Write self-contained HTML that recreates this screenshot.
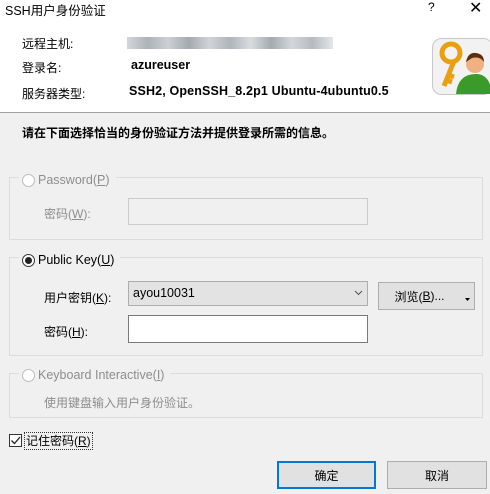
<!DOCTYPE html>
<html><head><meta charset="utf-8"><style>
*{margin:0;padding:0;box-sizing:border-box}
body{width:490px;height:494px;background:#f0f0f0;font-family:"Liberation Sans","Microsoft YaHei","Noto Sans CJK SC",sans-serif;font-size:12px;color:#000;position:relative;overflow:hidden}
.a{position:absolute;white-space:nowrap}
.top{position:absolute;left:0;top:0;width:490px;height:113px;background:#fff;border-bottom:1px solid #a0a0a0}
.grp{position:absolute;left:9px;width:474px;border:1px solid #dcdcdc}
.lg{position:absolute;background:#f0f0f0;padding:0 6px 0 3px;display:flex;align-items:center;height:16px;font-size:12.5px}
.rad{width:13px;height:13px;border-radius:50%;border:1px solid #bcbcbc;background:#fff;margin-right:3px;position:relative}
.dis{color:#8d8d8d}
.fld{position:absolute;border:1px solid #7a7a7a;background:#fff}
.btn{position:absolute;background:#e1e1e1;border:1px solid #adadad;display:flex;align-items:center;justify-content:center;font-size:12px}
u{text-decoration:underline}
</style></head><body>
<div class="top"></div>
<div class="a" style="left:5px;top:0;font-size:12.5px">SSH用户身份验证</div>
<div class="a" style="left:428px;top:0;font-size:12px">?</div>
<div class="a" style="left:469px;top:-2px;font-size:16px">✕</div>
<div class="a" style="left:22px;top:35px">远程主机:</div>
<div class="a" style="left:127px;top:37px;width:206px;height:12px;background:linear-gradient(90deg,#c8cbd0,#9aa0a8,#c0c4ca,#8e949c,#c5c9ce,#9ca2aa,#d0d3d7,#8f959d,#c9ccd0,#a4a9b0,#dde0e3);opacity:.8"></div>
<div class="a" style="left:22px;top:59px">登录名:</div>
<div class="a" style="left:131px;top:58px;font-weight:bold;font-size:12.5px">azureuser</div>
<div class="a" style="left:22px;top:85px">服务器类型:</div>
<div class="a" style="left:129px;top:84px;font-weight:bold;font-size:12.5px;letter-spacing:0.15px">SSH2, OpenSSH_8.2p1 Ubuntu-4ubuntu0.5</div>
<svg class="a" style="left:432px;top:38px" width="58" height="57" viewBox="0 0 58 57">
<rect x="0.5" y="0.5" width="60" height="56" rx="9" fill="#f2f2f2" stroke="#c8c8c8"/>
<circle cx="19" cy="15" r="9" fill="none" stroke="#e8a010" stroke-width="5"/>
<path d="M22 23 L12 48 M14 42 L20 44 M16 37 L22 39" stroke="#e8a010" stroke-width="5" fill="none"/>
<path d="M24 56 Q26 36 44 36 Q58 36 60 56Z" fill="#3a9a2a"/>
<circle cx="43" cy="26" r="9" fill="#f0b080"/>
<path d="M34 24 Q36 14 44 15 Q52 16 52 24 Q48 18 40 20Z" fill="#5a3010"/>
</svg>
<div class="a" style="left:22px;top:124px;font-weight:bold">请在下面选择恰当的身份验证方法并提供登录所需的信息。</div>

<div class="grp" style="top:177px;height:63px"></div>
<div class="lg dis" style="left:19px;top:172px"><span class="rad"></span>Password(<u>P</u>)</div>
<div class="a dis" style="left:44px;top:205px">密码(<u>W</u>):</div>
<div class="fld" style="left:128px;top:198px;width:240px;height:27px;background:#f0f0f0;border-color:#cccccc"></div>

<div class="grp" style="top:257px;height:99px"></div>
<div class="lg" style="left:19px;top:252px"><span class="rad" style="border-color:#333"><span style="position:absolute;left:2px;top:2px;width:7px;height:7px;border-radius:50%;background:#222"></span></span>Public Key(<u>U</u>)</div>
<div class="a" style="left:44px;top:289px">用户密钥(<u>K</u>):</div>
<div class="fld" style="left:128px;top:281px;width:240px;height:25px;background:#e3e3e3;border-color:#adadad"></div>
<div class="a" style="left:133px;top:286px;font-size:12.5px">ayou10031</div>
<svg class="a" style="left:354px;top:290px" width="9" height="6"><path d="M1 1 L4.5 4.5 L8 1" stroke="#555" fill="none"/></svg>
<div class="btn" style="left:378px;top:282px;width:97px;height:28px;padding-right:14px">浏览(<u>B</u>)...</div>
<svg class="a" style="left:465px;top:298px" width="6" height="4"><path d="M0 0 H5 L2.5 3Z" fill="#000"/></svg>
<div class="a" style="left:44px;top:323px">密码(<u>H</u>):</div>
<div class="fld" style="left:128px;top:315px;width:240px;height:28px"></div>

<div class="grp" style="top:373px;height:45px"></div>
<div class="lg dis" style="left:19px;top:367px"><span class="rad"></span>Keyboard Interactive(<u>I</u>)</div>
<div class="a dis" style="left:44px;top:394px">使用键盘输入用户身份验证。</div>

<div class="a" style="left:9px;top:434px;width:13px;height:13px;border:1px solid #333;background:#fff"><svg width="11" height="11" style="position:absolute;left:0;top:0"><path d="M1.5 5.5 L4.5 8.5 L10 2" stroke="#222" stroke-width="1.3" fill="none"/></svg></div>
<div class="a" style="left:24px;top:432px;height:18px;padding:0 1px;border:1px dotted #333;line-height:16px">记住密码(<u>R</u>)</div>

<div class="btn" style="left:277px;top:461px;width:99px;height:28px;border:2px solid #0078d7">确定</div>
<div class="btn" style="left:387px;top:461px;width:100px;height:28px">取消</div>
</body></html>
